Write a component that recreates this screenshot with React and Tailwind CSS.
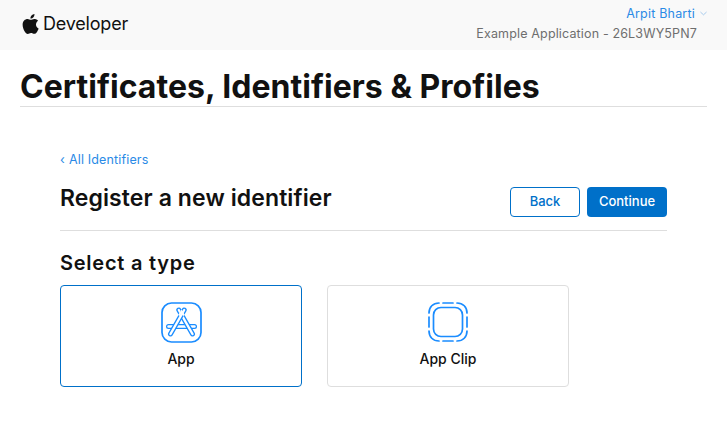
const font = { fontFamily: "Inter, sans-serif" };

function AppleLogo() {
  return (
    <svg width="17" height="20" viewBox="0 0 814 1000" fill="#111">
      <path d="M788 341c-6 4-107 62-107 189 0 147 129 199 133 200-1 3-21 71-68 141-42 61-86 122-153 122s-84-39-161-39c-75 0-102 40-163 40s-104-56-153-125C59 788 13 662 13 543c0-192 125-294 248-294 65 0 120 43 161 43 39 0 100-45 174-45 28 0 129 2 192 94zM554 159c31-36 52-87 52-138 0-7-1-14-2-20-50 2-110 33-146 75-28 32-55 83-55 135 0 8 1 16 2 18 3 1 8 1 13 1 45 0 102-30 136-71z" />
    </svg>
  );
}

function Tube({ d }) {
  return (
    <>
      <path d={d} stroke="#1a8cff" strokeWidth="5" strokeLinecap="round" />
      <path d={d} stroke="#fff" strokeWidth="2.4" strokeLinecap="round" />
    </>
  );
}

function AppIcon() {
  return (
    <svg width="41" height="41" viewBox="0 0 41 41" fill="none" stroke="#1a8cff">
      <rect x="1" y="1" width="39" height="39" rx="9.5" strokeWidth="1.7" />
      <Tube d="M7.500 24.500H33.500" />
      <path d="M17.500 19.500 14.500 24.500M23.500 19.500 26.500 24.500" stroke="#fff" strokeWidth="2.600" />
      <Tube d="M17.800 8 31.500 32" />
      <Tube d="M23.200 8 9.500 32" />
      <path d="M18 13.500 20.500 9.500 23 13.500" stroke="#fff" strokeWidth="2" fill="none" />
    </svg>
  );
}

function ClipIcon() {
  return (
    <svg width="40" height="40" viewBox="0 0 40 40" fill="none" stroke="#1a8cff" strokeWidth="1.700">
      <rect x="5.500" y="5.500" width="29" height="29" rx="7.500" />
      <path d="M1 15V25M39 15V25M15 1H25M15 39H25" strokeLinecap="round" />
      <path d="M1 29C1 35 5 39 11 39M39 29C39 35 35 39 29 39M1 11C1 5 5 1 11 1M39 11C39 5 35 1 29 1" strokeLinecap="round" />
    </svg>
  );
}

export default function App() {
  return (
    <div style={font} className="w-[727px] h-[443px] overflow-hidden bg-white text-[#111]">
      <header className="h-[50px] bg-[#f9f9f9] flex justify-between pl-[22px] pr-[20px]">
        <div className="flex items-center gap-[4px] h-[47px]">
          <AppleLogo />
          <span className="text-[18px] leading-[24px] mt-[1px] font-normal tracking-[-0.2px]">Developer</span>
        </div>
        <div className="flex flex-col items-end pt-[5px]">
          <div className="flex items-center gap-[5px] text-[12.5px] leading-[17px] text-[#2a8ae6] tracking-[0.2px]">
            Arpit Bharti
            <svg width="7" height="5" viewBox="0 0 8 5" fill="none" stroke="#9cc4ea" strokeWidth="1"><path d="M.5.8 4 4 7.500.8" /></svg>
          </div>
          <div className="text-[12.5px] leading-[17px] mt-[3px] pr-[10px] text-[#6e6e6e] tracking-[0.15px]">Example Application - 26L3WY5PN7</div>
        </div>
      </header>
      <div className="mx-[20px] h-[57px] border-b border-[#dedede]">
        <h1 className="pt-[18px] text-[32px] leading-[38px] font-bold tracking-[0.03px] whitespace-nowrap">Certificates, Identifiers &amp; Profiles</h1>
      </div>
      <main className="ml-[60px] w-[607px] pt-[45px]">
        <a className="flex gap-[4px] text-[12.5px] leading-[15px] text-[#2a8ae6] tracking-[0.15px]"><span>‹</span><span>All Identifiers</span></a>
        <div className="flex justify-between h-[53px] border-b border-[#dedede] mt-[11px]">
          <h2 className="text-[23px] leading-[27px] font-semibold tracking-[0.1px] mt-[7px]">Register a new identifier</h2>
          <div className="flex gap-[7px] mt-[9px] h-[30px]">
            <button className="w-[70px] h-[30px] rounded-[4px] border border-[#0070c9] text-[13px] font-medium text-[#0070c9] bg-white">Back</button>
            <button className="w-[80px] h-[30px] rounded-[4px] bg-[#0070c9] text-[13px] font-medium text-white">Continue</button>
          </div>
        </div>
        <h3 className="mt-[20px] text-[20px] leading-[24px] font-semibold tracking-[0.75px]">Select a type</h3>
        <div className="flex gap-[25px] mt-[10px]">
          <div className="w-[242px] h-[102px] rounded-[4px] border border-[#0070c9] flex flex-col items-center pt-[16px]">
            <AppIcon />
            <span className="mt-[7px] text-[14px] leading-[18px] font-medium">App</span>
          </div>
          <div className="w-[242px] h-[102px] rounded-[4px] border border-[#dedede] flex flex-col items-center pt-[16px]">
            <ClipIcon />
            <span className="mt-[8px] text-[14px] leading-[18px] font-medium">App Clip</span>
          </div>
        </div>
      </main>
    </div>
  );
}
